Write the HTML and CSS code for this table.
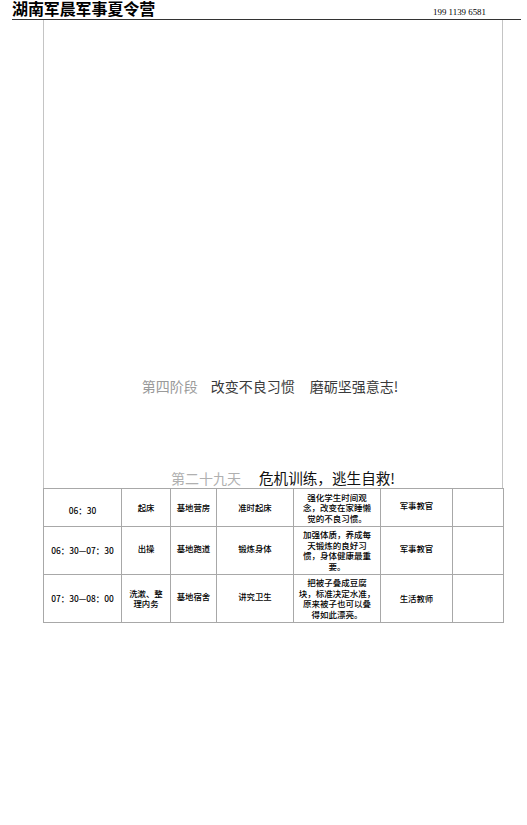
FILE: index.html
```html
<!DOCTYPE html>
<html lang="zh-CN">
<head>
<meta charset="utf-8">
<title>湖南军晨军事夏令营</title>
<link rel="stylesheet" href="styles.css">
</head>
<body>
<header class="top">
  <div class="brand">湖南军晨军事夏令营</div>
  <div class="phone">199 1139 6581</div>
</header>
<section class="frame">
  <h2 class="phase"><span class="dim">第四阶段</span><span class="gap1">改变不良习惯</span><span class="gap2">磨砺坚强意志!</span></h2>
  <h3 class="day"><span class="dim2">第二十九天</span><span class="gap3">危机训练，</span><span class="gap4">逃生自救!</span></h3>
</section>
<table class="sched">
  <colgroup>
    <col class="c1"><col class="c2"><col class="c3"><col class="c4"><col class="c5"><col class="c6"><col class="c7">
  </colgroup>
  <tr>
    <td class="low">06：30</td>
    <td>起床</td>
    <td>基地营房</td>
    <td>准时起床</td>
    <td class="txt">强化学生时间观<br>念，改变在家睡懒<br>觉的不良习惯。</td>
    <td class="up">军事教官</td>
    <td></td>
  </tr>
  <tr>
    <td>06：30—07：30</td>
    <td class="up">出操</td>
    <td class="up">基地跑道</td>
    <td class="up">锻炼身体</td>
    <td class="txt">加强体质，养成每<br>天锻炼的良好习<br>惯，身体健康最重<br>要。</td>
    <td class="up">军事教官</td>
    <td></td>
  </tr>
  <tr>
    <td>07：30—08：00</td>
    <td class="two">洗漱、整<br>理内务</td>
    <td class="up">基地宿舍</td>
    <td class="up">讲究卫生</td>
    <td class="txt">把被子叠成豆腐<br>块，标准决定水准，<br>原来被子也可以叠<br>得如此漂亮。</td>
    <td>生活教师</td>
    <td></td>
  </tr>
</table>
</body>
</html>
```

FILE: styles.css
```css
html, body {
  margin: 0;
  padding: 0;
  background: #ffffff;
}
body {
  font-family: "Noto Sans CJK SC", "Noto Sans", sans-serif;
  color: #000;
}
.top {
  display: flex;
  align-items: center;
  justify-content: space-between;
  height: 19px;
  margin: 0 6px 0 12px;
  border-bottom: 1px solid #333;
}
.brand {
  font-family: "Liberation Sans", "Noto Sans CJK SC", sans-serif;
  font-weight: 700;
  font-size: 16px;
  line-height: 19px;
  letter-spacing: -0.1px;
}
.phone {
  font-family: "Liberation Serif", serif;
  font-size: 8.9px;
  line-height: 12px;
  margin-right: 35px;
  margin-top: 4px;
}
.frame {
  width: 458px;
  margin-left: 43px;
  border-left: 1px solid #c4c4c4;
  border-right: 1px solid #c4c4c4;
  padding-top: 356px;
  display: flex;
  flex-direction: column;
  align-items: center;
}
.phase {
  margin: 0;
  font-weight: 400;
  font-size: 14px;
  line-height: 20px;
  color: #3a3a3a;
  white-space: nowrap;
  padding-right: 6px;
}
.dim { color: #9a9a9a; }
.gap1 { margin-left: 13px; }
.gap2 { margin-left: 15px; }
.day {
  margin: 72px 0 0 0;
  font-weight: 400;
  font-size: 14px;
  line-height: 20px;
  color: #111;
  white-space: nowrap;
  padding-left: 20px;
}
.dim2 { color: #b0b0b0; }
.gap3 { margin-left: 18px; font-size: 14.6px; }
.gap4 { font-size: 14.6px; }
.sched {
  margin-left: 43px;
  width: 460px;
  border-collapse: collapse;
  table-layout: fixed;
}
.c1 { width: 78px; }
.c2 { width: 49px; }
.c3 { width: 46px; }
.c4 { width: 77px; }
.c5 { width: 87px; }
.c6 { width: 72px; }
.c7 { width: 51px; }
.sched td {
  border: 1px solid #a8a8a8;
  text-align: center;
  vertical-align: middle;
  font-size: 8.4px;
  font-weight: 500;
  line-height: 10.5px;
  padding: 2.5px 2px;
  white-space: nowrap;
}
.sched td.txt { font-size: 8.5px; }
.sched td.low { padding-top: 8px; }
.sched td.up { padding-bottom: 7px; }
```
